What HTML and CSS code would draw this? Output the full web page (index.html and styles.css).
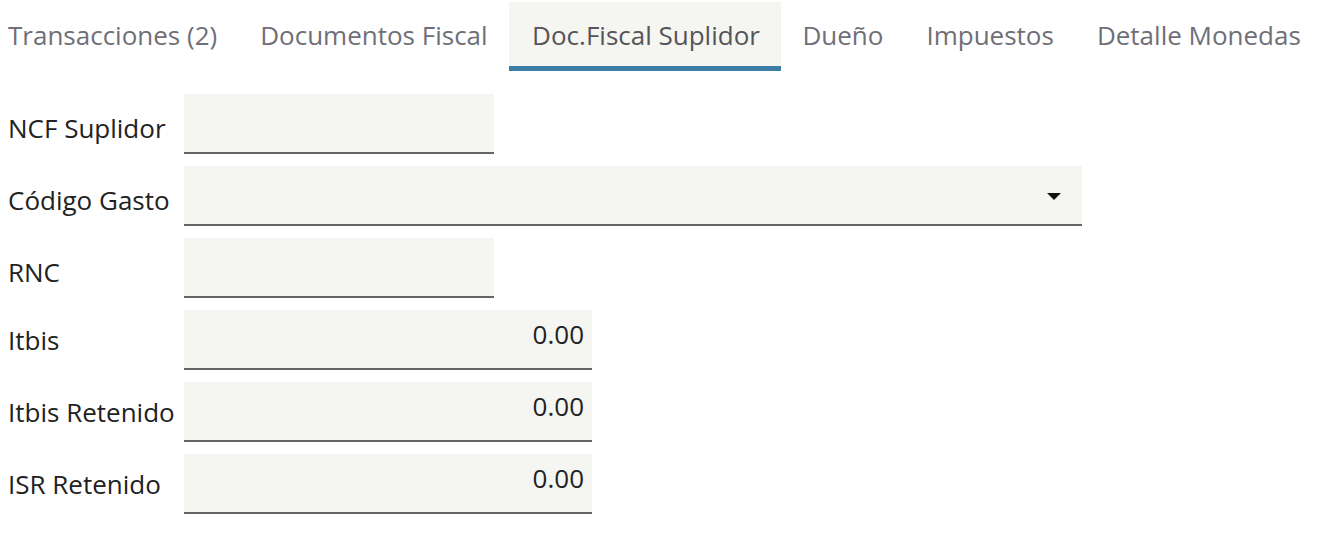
FILE: index.html
```html
<!DOCTYPE html>
<html lang="es">
<head>
<meta charset="utf-8">
<title>Doc.Fiscal Suplidor</title>
<link rel="stylesheet" href="styles.css">
</head>
<body>
<div class="page">
  <nav class="tabs">
    <div class="tab">Transacciones (2)</div>
    <div class="tab">Documentos Fiscal</div>
    <div class="tab active">Doc.Fiscal Suplidor</div>
    <div class="tab">Dueño</div>
    <div class="tab">Impuestos</div>
    <div class="tab">Detalle Monedas</div>
  </nav>
  <form class="form">
    <div class="row">
      <label class="label">NCF Suplidor</label>
      <div class="field w-sm"></div>
    </div>
    <div class="row">
      <label class="label">Código Gasto</label>
      <div class="field w-lg select"><span class="caret"></span></div>
    </div>
    <div class="row">
      <label class="label">RNC</label>
      <div class="field w-sm"></div>
    </div>
    <div class="row num-row">
      <label class="label">Itbis</label>
      <div class="field w-md num">0.00</div>
    </div>
    <div class="row num-row">
      <label class="label">Itbis Retenido</label>
      <div class="field w-md num">0.00</div>
    </div>
    <div class="row num-row">
      <label class="label">ISR Retenido</label>
      <div class="field w-md num">0.00</div>
    </div>
  </form>
</div>
</body>
</html>
```

FILE: styles.css
```css
* { box-sizing: border-box; }
html, body { margin: 0; padding: 0; background: #ffffff; }
body {
  font-family: "Open Sans", "Noto Sans", sans-serif;
  font-size: 26px;
  color: #222222;
}
.page {
  padding-left: 8px;
  overflow: hidden;
}
.tabs {
  display: flex;
  margin-top: 2px;
  margin-left: -21.5px;
}
.tab {
  padding: 15px 21.5px 13px;
  line-height: 36px;
  border-bottom: 5px solid transparent;
  color: #6f6f77;
  white-space: nowrap;
}
.tab.active {
  background: #f5f5f2;
  border-bottom-color: #3a7ea6;
  color: #555559;
  padding-left: 23px;
  padding-right: 21px;
}
.form {
  display: flex;
  flex-direction: column;
  gap: 12px;
  margin-top: 23px;
}
.row {
  display: flex;
  align-items: center;
}
.label {
  width: 176px;
  flex: none;
  line-height: 36px;
  margin-top: 8px;
  color: #222222;
}
.num-row .label {
  margin-top: 0;
}
.field {
  height: 60px;
  background: #f5f5f2;
  border-bottom: 2px solid #666666;
  position: relative;
}
.w-sm { width: 310px; }
.w-md { width: 408px; }
.w-lg { width: 898px; }
.num {
  text-align: right;
  padding: 6px 8px 0 0;
  line-height: 36px;
  color: #222222;
}
.caret {
  position: absolute;
  right: 21px;
  top: 27px;
  width: 0;
  height: 0;
  border-left: 7px solid transparent;
  border-right: 7px solid transparent;
  border-top: 7px solid #111111;
}
```
